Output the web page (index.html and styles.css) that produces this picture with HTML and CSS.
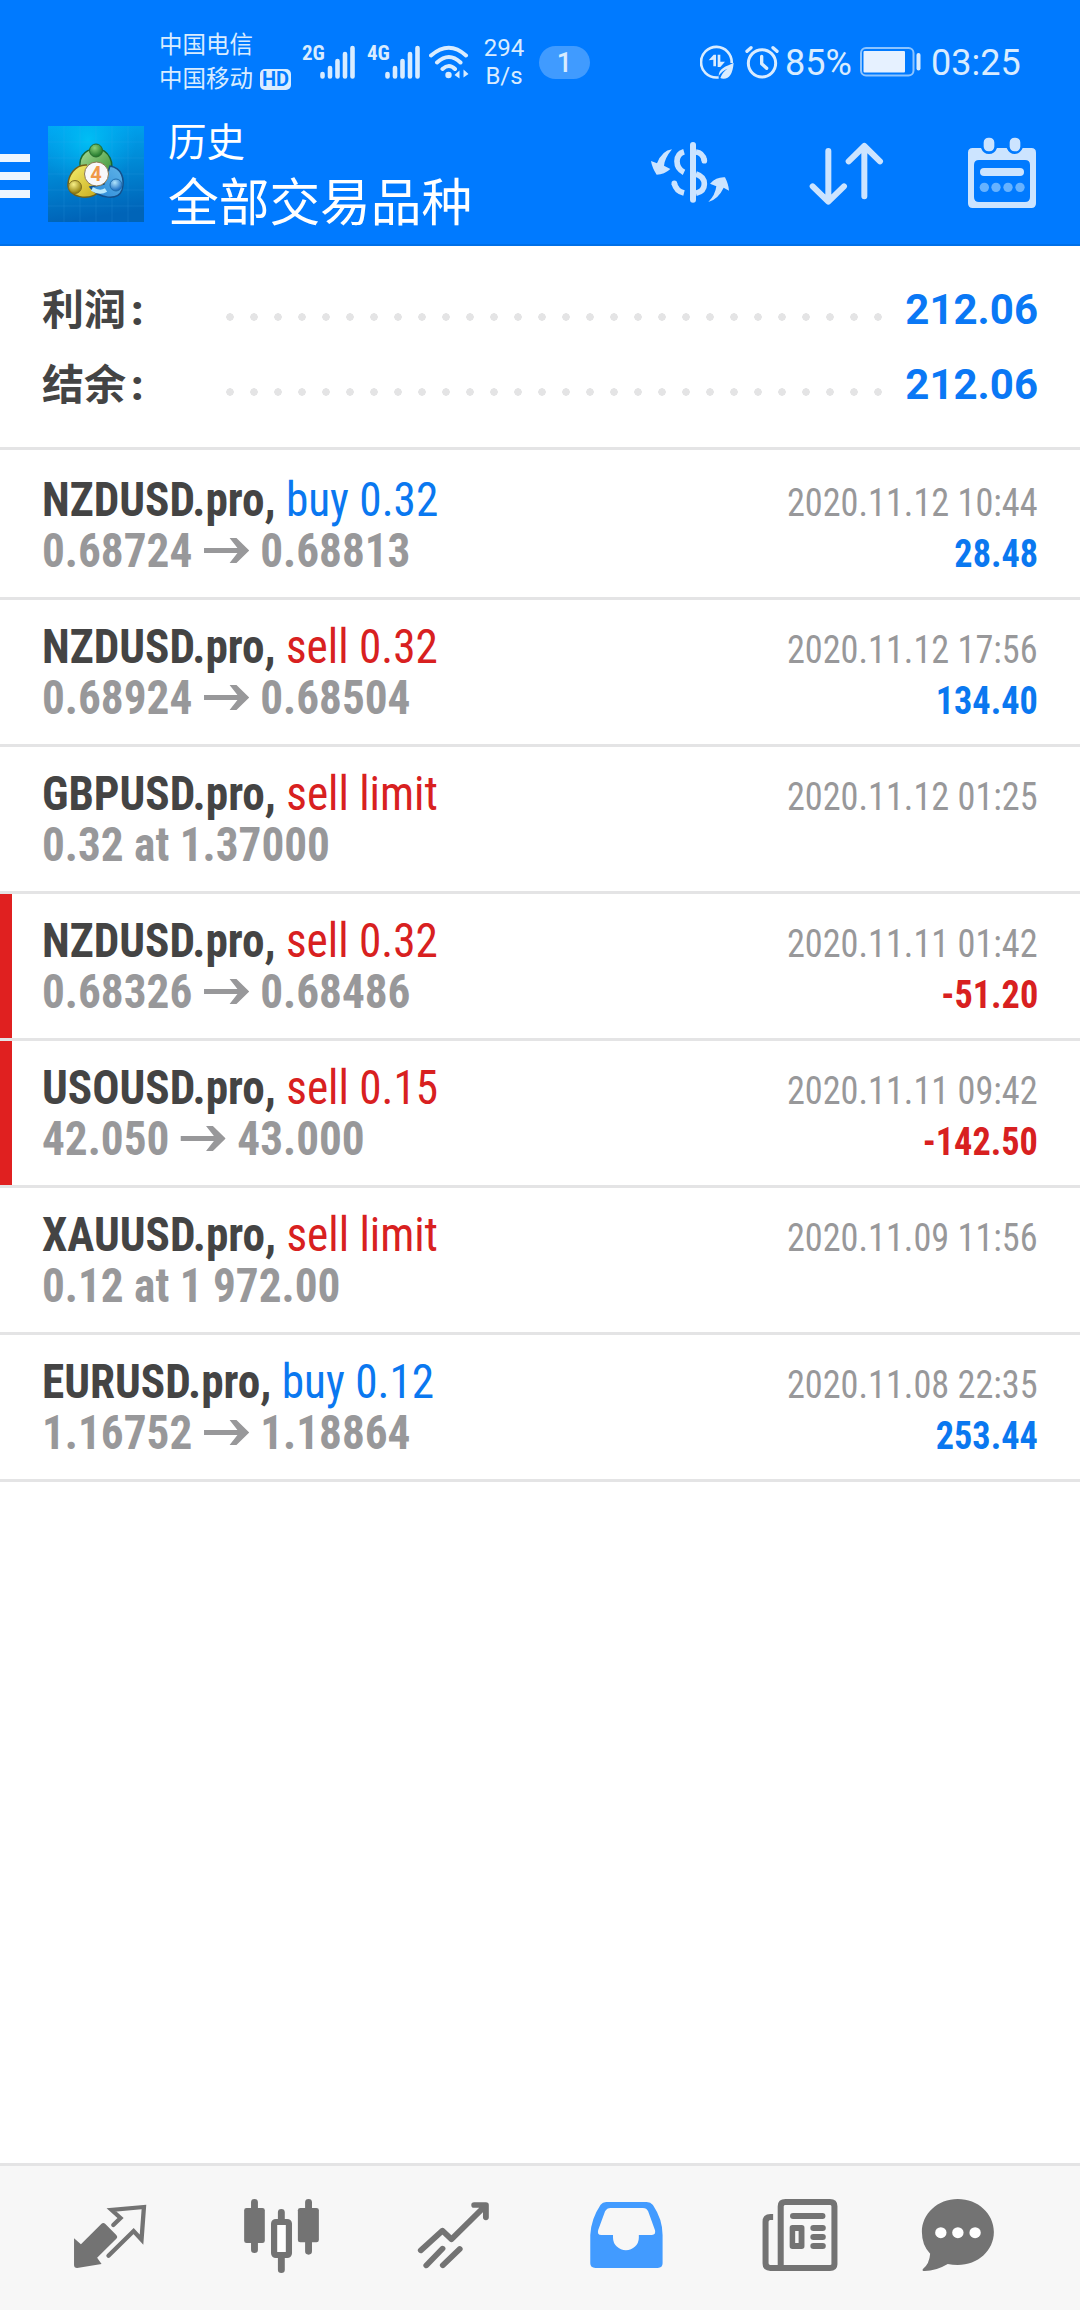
FILE: index.html
```html
<!DOCTYPE html>
<html lang="zh-CN">
<head>
<meta charset="utf-8">
<title>历史</title>
<link rel="stylesheet" href="styles.css">
</head>
<body>
<header class="header">
  <div class="status">
    <div class="carriers">
      <div>中国电信</div>
      <div class="carrier-row">中国移动<span class="hd">HD</span></div>
    </div>
    <div class="signal first"><span class="net">2G</span>
      <svg width="35" height="34" viewBox="0 0 35 34" fill="none" stroke="#d9ecff" stroke-width="4.6" stroke-linecap="round"><path d="M2.5 29v2.5M10 23v8.500M17.500 16v15.500M25 9v22.500M32.500 3v28.500"/></svg>
    </div>
    <div class="signal second"><span class="net">4G</span>
      <svg width="35" height="34" viewBox="0 0 35 34" fill="none" stroke="#d9ecff" stroke-width="4.6" stroke-linecap="round"><path d="M2.5 29v2.5M10 23v8.500M17.500 16v15.500M25 9v22.500M32.500 3v28.500"/></svg>
    </div>
    <svg class="wifi" width="40" height="34" viewBox="0 0 40 34"><g fill="none" stroke="#d9ecff" stroke-width="4" stroke-linecap="round"><path d="M2 10.500Q20-5 37 10.500M8 17.500Q20 6.500 31.500 17.500M13.500 24Q20 18 26 24"/></g><circle cx="19.500" cy="30" r="3.200" fill="#d9ecff"/><path d="M25.500 30l5-4.500v8zM39.500 29l-5-4.500v8z" fill="#d9ecff"/></svg>
    <div class="rate"><div>294</div><div>B/s</div></div>
    <div class="pill">1</div>
    <svg class="saver" width="34" height="34" viewBox="299 134 102 102"><path d="M355 231.500H349A46 46 0 1 1 394 188" fill="none" stroke="#d9ecff" stroke-width="8"/><path d="M325 180l15-17h7v35h-8v-20zM352 163h8v21h14l-14 16h-8z" fill="#d9ecff"/><path d="M400 187Q396 236 369 235Q364 235 360 233Q366 215 382 205Q364 212 355 227C355 203 376 199 400 187z" fill="#d9ecff"/></svg>
    <svg class="alarm" width="34" height="34" viewBox="434 134 102 102" fill="none" stroke="#d9ecff" stroke-width="9" stroke-linecap="round"><circle cx="485" cy="189" r="41"/><path d="M484 168v22l15 14" stroke-width="10" stroke-linejoin="round"/><path d="M440 153l12-11M518 142l12 11" stroke-width="10"/></svg>
    <span class="percent">85%</span>
    <svg class="battery" width="62" height="30" viewBox="0 0 62 30"><rect x="1" y="1" width="52.500" height="27.500" rx="5" fill="none" stroke="#8cc4ff" stroke-width="2"/><rect x="3.500" y="4" width="41.500" height="21.500" rx="1" fill="#e6f1ff"/><rect x="56.500" y="6" width="4" height="17.500" rx="2" fill="#d9ecff"/></svg>
    <span class="clock">03:25</span>
  </div>
  <div class="appbar">
    <div class="menu"><i></i><i></i><i></i></div>
    <svg class="logo" width="96" height="96" viewBox="0 0 96 96">
      <defs>
        <linearGradient id="sky" x1="0" y1="0" x2=".15" y2="1"><stop offset="0" stop-color="#00a8f4"/><stop offset=".45" stop-color="#008cd8"/><stop offset="1" stop-color="#0064b8"/></linearGradient>
        <radialGradient id="glow" cx=".42" cy=".15" r=".5"><stop offset="0" stop-color="#00c8f8" stop-opacity=".8"/><stop offset="1" stop-color="#00b0f0" stop-opacity="0"/></radialGradient>
        <linearGradient id="green" x1="0" y1="0" x2="1" y2="1"><stop offset="0" stop-color="#a8dc98"/><stop offset="1" stop-color="#2f8c2c"/></linearGradient>
        <linearGradient id="yellow" x1="0" y1="0" x2="1" y2="1"><stop offset="0" stop-color="#f4f070"/><stop offset="1" stop-color="#c8a818"/></linearGradient>
        <linearGradient id="azure" x1="1" y1="0" x2="0" y2="1"><stop offset="0" stop-color="#60b4e8"/><stop offset="1" stop-color="#2888d8"/></linearGradient>
        <radialGradient id="gball" cx=".4" cy=".3" r=".7"><stop offset="0" stop-color="#8cd078"/><stop offset="1" stop-color="#1c7428"/></radialGradient>
        <radialGradient id="yball" cx=".4" cy=".3" r=".7"><stop offset="0" stop-color="#f8f088"/><stop offset="1" stop-color="#907c08"/></radialGradient>
        <radialGradient id="bball" cx=".4" cy=".3" r=".7"><stop offset="0" stop-color="#b0e4fc"/><stop offset="1" stop-color="#1468c0"/></radialGradient>
      </defs>
      <path d="M0 0h96v96H0z" fill="url(#sky)"/><path d="M0 0h96v96H0z" fill="url(#glow)"/>
      <path d="M16 0v96M32 0v96M48 0v96M64 0v96M80 0v96M0 16h96M0 32h96M0 48h96M0 64h96M0 80h96" stroke="#40b8f0" stroke-opacity=".15"/>
      <path d="M34 47C28 33 36 23 48 23C61 23 68 38 61 49Q59 53 55 54" fill="url(#green)" stroke="#1a6830" stroke-width="1.500"/>
      <path d="M39 39C27 38 20 50 20 59C20 71 40 76 53 65" fill="url(#yellow)" stroke="#706018" stroke-width="1.500"/>
      <path d="M62 40C74 42 77 53 74 64C70 75 51 73 42 61L56 58z" fill="url(#azure)" stroke="#14508c" stroke-width="1.500"/>
      <path d="M44 63q8 5 14 1" stroke="#b8e8fc" stroke-width="4" fill="none"/>
      <circle cx="48" cy="24.500" r="6.500" fill="url(#gball)" stroke="#286c2c"/><circle cx="27" cy="61" r="6.500" fill="url(#yball)" stroke="#807020"/><circle cx="68" cy="59" r="6" fill="url(#bball)" stroke="#2070b0"/>
      <circle cx="48.500" cy="48" r="12" fill="#f8f8fa" stroke="#8c7850" stroke-width="1"/>
      <text x="48" y="55" text-anchor="middle" class="four">4</text>
    </svg>
    <div class="titles"><div class="small">历史</div><div class="big">全部交易品种</div></div>
    <svg class="dollar" width="80" height="64" viewBox="150 422 240 192"><path d="M279 434v164" stroke="#cce4ff" stroke-width="18" stroke-linecap="round"/><g fill="none" stroke="#cce4ff" stroke-width="17"><path d="M252 454Q231 460 231 483Q231 506 252 516M288 455Q308 457 313 480M288 521Q313 529 313 551Q313 573 288 579M252 578Q228 572 223 549"/><path d="M313 480v1M223 549v1" stroke-linecap="round"/></g><path d="M216 447Q186 451 171 489L153 482Q156 502 170 523Q193 523 211 506L192 496Q194 474 216 447zM325 605Q355 596 371 562L387 571Q386 553 375 531Q350 529 330 550L349 558Q346 584 325 605z" fill="#cce4ff"/></svg>
    <svg class="sort" width="76" height="66" viewBox="626 422 228 198" fill="none" stroke="#cce4ff" stroke-width="18" stroke-linecap="round" stroke-linejoin="round"><path d="M684 452v150M637 558l47 46 47-46M792 588V438M745 483l47-46 47 46"/></svg>
    <svg class="calendar" width="70" height="74" viewBox="1101 408 210 222"><path fill-rule="evenodd" fill="#cce4ff" d="M1118 444H1143Q1150 462 1167 462T1191 444H1220Q1228 462 1244 462T1268 444H1294Q1308 444 1308 458V610Q1308 624 1294 624H1118Q1104 624 1104 610V458Q1104 444 1118 444zM1137 480Q1122 480 1122 495V591Q1122 606 1137 606H1275Q1290 606 1290 591V495Q1290 480 1275 480z"/><g fill="#cce4ff" stroke="#007aff" stroke-width="5"><rect x="1148.500" y="410.500" width="37" height="46" rx="17"/><rect x="1226.500" y="410.500" width="37" height="46" rx="17"/></g><rect x="1140" y="504" width="132" height="24" rx="12" fill="#cce4ff"/><g fill="#66b2ff"><circle cx="1153" cy="562" r="14"/><circle cx="1188" cy="562" r="14"/><circle cx="1224" cy="562" r="14"/><circle cx="1260" cy="562" r="14"/></g></svg>
  </div>
</header>
<main>
  <section class="summary">
    <div class="sum"><span class="label">利润<b>:</b></span><span class="dots"></span><span class="total">212.06</span></div>
    <div class="sum"><span class="label">结余<b>:</b></span><span class="dots"></span><span class="total">212.06</span></div>
  </section>
  <section class="deals">
    <article class="deal">
      <div class="line"><div class="name">NZDUSD.pro, <span class="buy">buy 0.32</span></div><time>2020.11.12 10:44</time></div>
      <div class="line"><div class="price">0.68724 <svg class="arrow" viewBox="0 0 46 28" preserveAspectRatio="none"><path d="M0 11.500h34L26 1h7l13 13-13 13h-7l8-10.500H0z"/></svg> 0.68813</div><div class="profit buy">28.48</div></div>
    </article>
    <article class="deal">
      <div class="line"><div class="name">NZDUSD.pro, <span class="sell">sell 0.32</span></div><time>2020.11.12 17:56</time></div>
      <div class="line"><div class="price">0.68924 <svg class="arrow" viewBox="0 0 46 28" preserveAspectRatio="none"><path d="M0 11.500h34L26 1h7l13 13-13 13h-7l8-10.500H0z"/></svg> 0.68504</div><div class="profit buy">134.40</div></div>
    </article>
    <article class="deal">
      <div class="line"><div class="name">GBPUSD.pro, <span class="sell">sell limit</span></div><time>2020.11.12 01:25</time></div>
      <div class="line"><div class="price">0.32 at 1.37000</div></div>
    </article>
    <article class="deal loss">
      <div class="line"><div class="name">NZDUSD.pro, <span class="sell">sell 0.32</span></div><time>2020.11.11 01:42</time></div>
      <div class="line"><div class="price">0.68326 <svg class="arrow" viewBox="0 0 46 28" preserveAspectRatio="none"><path d="M0 11.500h34L26 1h7l13 13-13 13h-7l8-10.500H0z"/></svg> 0.68486</div><div class="profit sell">-51.20</div></div>
    </article>
    <article class="deal loss">
      <div class="line"><div class="name">USOUSD.pro, <span class="sell">sell 0.15</span></div><time>2020.11.11 09:42</time></div>
      <div class="line"><div class="price">42.050 <svg class="arrow" viewBox="0 0 46 28" preserveAspectRatio="none"><path d="M0 11.500h34L26 1h7l13 13-13 13h-7l8-10.500H0z"/></svg> 43.000</div><div class="profit sell">-142.50</div></div>
    </article>
    <article class="deal">
      <div class="line"><div class="name">XAUUSD.pro, <span class="sell">sell limit</span></div><time>2020.11.09 11:56</time></div>
      <div class="line"><div class="price">0.12 at 1 972.00</div></div>
    </article>
    <article class="deal">
      <div class="line"><div class="name">EURUSD.pro, <span class="buy">buy 0.12</span></div><time>2020.11.08 22:35</time></div>
      <div class="line"><div class="price">1.16752 <svg class="arrow" viewBox="0 0 46 28" preserveAspectRatio="none"><path d="M0 11.500h34L26 1h7l13 13-13 13h-7l8-10.500H0z"/></svg> 1.18864</div><div class="profit buy">253.44</div></div>
    </article>
  </section>
</main>
<nav class="tabs">
  <svg viewBox="24 16 172 144"><g transform="scale(.34436 .33333)"><path d="M215 265L235 283 294 222Q300 216 306 222L337 254Q344 261 337 267L282 323 295 342 224 354Q215 354 215 345z" fill="#737373"/><path d="M329 225L350 204 324 180 418 171 411 269 388 243 315 317" fill="none" stroke="#737373" stroke-width="12.500" stroke-linecap="round"/></g></svg>
  <svg viewBox="196 16 172 144"><g transform="scale(.34436 .33333)"><g stroke="#737373" stroke-width="20" stroke-linecap="round"><path d="M739 157v142M896 157v147M817 187v30M817 310v49"/></g><g fill="#737373"><rect x="709" y="174" width="60" height="105" rx="7"/><rect x="865" y="174" width="61" height="103" rx="7"/></g><rect x="796" y="216" width="43" height="99" rx="5" fill="#fff" stroke="#737373" stroke-width="18"/></g></svg>
  <svg viewBox="368 16 172 144"><g transform="scale(.34436 .33333)" fill="none" stroke="#737373" stroke-width="17" stroke-linecap="round" stroke-linejoin="round"><path d="M1222 301L1285 242 1311 268 1408 169M1377 165H1411V202M1238 346L1285 296M1286 346L1335 297"/></g></svg>
  <svg viewBox="540 16 172 144"><g transform="translate(540) scale(.34436 .33333)"><path fill="#429bff" fill-rule="evenodd" d="M192 156H310Q321 156 328 165Q356 208 356 255V340Q356 354 342 354H161Q146 354 146 340V255Q148 207 176 164Q182 156 192 156zM205 174Q194 174 189 184L169 240Q165 255 178 255H212V263A37 37 0 0 0 287 263V255H325Q337 255 334 241L314 184Q310 174 299 174z"/></g></svg>
  <svg viewBox="712 16 172 144"><g transform="translate(540) scale(.34436 .33333)"><path fill="none" stroke="#737373" stroke-width="17.500" d="M677 201H669Q655 201 655 215V340Q655 354 669 354H842Q855 354 855 343V169Q855 156 842 156H713Q699 156 699 169V354"/><g fill="#737373"><rect x="726" y="189" width="103" height="18" rx="9"/><rect x="785" y="225" width="45" height="18" rx="9"/><rect x="785" y="252" width="45" height="18" rx="9"/><rect x="785" y="279" width="45" height="18" rx="9"/><path fill-rule="evenodd" d="M733 225h27q8 0 8 8v56q0 8-8 8h-27q-8 0-8-8v-56q0-8 8-8zM741 243v36h10v-36z"/></g></g></svg>
  <svg viewBox="884 16 172 144"><g transform="translate(540) scale(.34436 .33333)"><path fill="#737373" d="M1213 147C1272 147 1318 191 1318 246S1272 345 1213 345Q1198 345 1184 342Q1150 363 1117 363Q1108 363 1112 357Q1131 341 1133 311Q1109 286 1109 246C1109 191 1155 147 1213 147z"/><g fill="#fff"><circle cx="1164" cy="248" r="16.500"/><circle cx="1213.500" cy="248" r="16.500"/><circle cx="1263.500" cy="248" r="16.500"/></g></g></svg>
</nav>
</body>
</html>
```
FILE: styles.css
```css
* { box-sizing: border-box; }
body {
  margin: 0;
  height: 2310px;
  display: flex;
  flex-direction: column;
  background: #fff;
  font-family: Roboto, "Noto Sans CJK SC", sans-serif;
}
svg { display: block; flex: none; }
.header { height: 246px; background: #007aff; border-bottom: 2px solid #0070e8; color: #fff; }
.status { height: 122px; padding: 2px 0 0 159px; display: flex; align-items: center; color: #d9ecff; white-space: nowrap; }
.carriers { font-size: 23.5px; line-height: 34px; width: 133px; flex: none; }
.carrier-row { display: flex; align-items: center; }
.hd { margin-left: 7px; width: 31px; height: 21px; border-radius: 5px; background: #d9ecff; color: #007aff; font-size: 20px; line-height: 21px; font-weight: 700; text-align: center; }
.signal { display: flex; align-items: flex-start; height: 34px; flex: none; }
.net { font-size: 21px; line-height: 17px; font-weight: 700; width: 18px; font-family: "Roboto Condensed", Roboto; font-stretch: 75%; }
.signal.first { margin-left: 10px; }
.signal.second { margin-left: 12px; }
.wifi { margin-left: 9px; }
.rate { width: 44px; margin-left: 13px; font-size: 24px; line-height: 28px; text-align: center; flex: none; }
.pill { width: 51px; height: 33px; margin-left: 13px; border-radius: 17px; background: #409bff; text-align: center; font-size: 27px; line-height: 34px; font-weight: 500; flex: none; }
.saver { margin-left: 110px; }
.alarm { margin-left: 11px; }
.percent, .clock { font-size: 36px; line-height: 44px; padding-top: 2px; }
.percent { width: 66px; margin-left: 6px; }
.battery { margin-left: 9px; }
.clock { margin-left: 9px; }
.appbar { height: 122px; display: flex; align-items: flex-start; }
.menu { width: 30px; margin-top: 32px; display: grid; gap: 10px; }
.menu i { height: 8px; background: #eef6ff; }
.logo { margin: 4px 0 0 18px; }
.four { font: 700 20px Roboto, sans-serif; fill: #f09848; }
.titles { width: 506px; padding-left: 24px; white-space: nowrap; }
.small { font-size: 38.5px; line-height: 42px; }
.big { font-size: 50.7px; line-height: 80px; }
.dollar { margin-top: 19px; }
.sort { margin: 19px 0 0 79px; }
.calendar { margin: 14px 0 0 82px; }
.summary { height: 204px; border-bottom: 3px solid #e4e4e5; padding: 26px 42px 0 42px; }
.sum { height: 75px; display: flex; align-items: center; font-weight: 700; font-size: 42px; line-height: 75px; }
.label { width: 176px; padding-top: 2px; color: #444; white-space: nowrap; }
.label b { margin-left: 5px; }
.dots { width: 672px; height: 8px; margin-top: 15px; background: radial-gradient(circle at 12px 4px, #e4e4e5 3.500px, transparent 4px) 0 0 / 24px 8px repeat-x; }
.total { flex: 1; text-align: right; color: #0a78f5; }
.deal { height: 147px; padding: 21px 42px 0 42px; border-bottom: 3px solid #e4e4e5; font-family: "Roboto Condensed", Roboto, sans-serif; font-stretch: 75%; }
.deal:first-child { height: 150px; padding-top: 24px; }
.loss { background: linear-gradient(#e02020, #e02020) 0 0 / 12px 100% no-repeat padding-box; }
.line { height: 51px; display: flex; justify-content: space-between; align-items: baseline; line-height: 51px; white-space: nowrap; }
.name, .price { font-size: 48px; font-weight: 700; transform: scaleX(.942); transform-origin: left; }
.name { color: #444; }
.name span { font-weight: 400; }
.price { color: #98989a; }
.arrow { display: inline-block; width: 48px; height: 27px; vertical-align: 3px; margin: 0 1px; fill: #98989a; }
time, .profit { font-size: 39px; transform: scaleX(.93); transform-origin: right; }
time { color: #98989a; }
.profit { font-weight: 700; }
.name .buy, .profit.buy { color: #0a78f0; }
.name .sell, .profit.sell { color: #d82020; }
.tabs { margin-top: auto; height: 147px; border-top: 3px solid #e4e4e5; background: #f7f7f7; display: flex; padding: 0 24px; }
.tabs svg { width: 172px; height: 144px; }
```
